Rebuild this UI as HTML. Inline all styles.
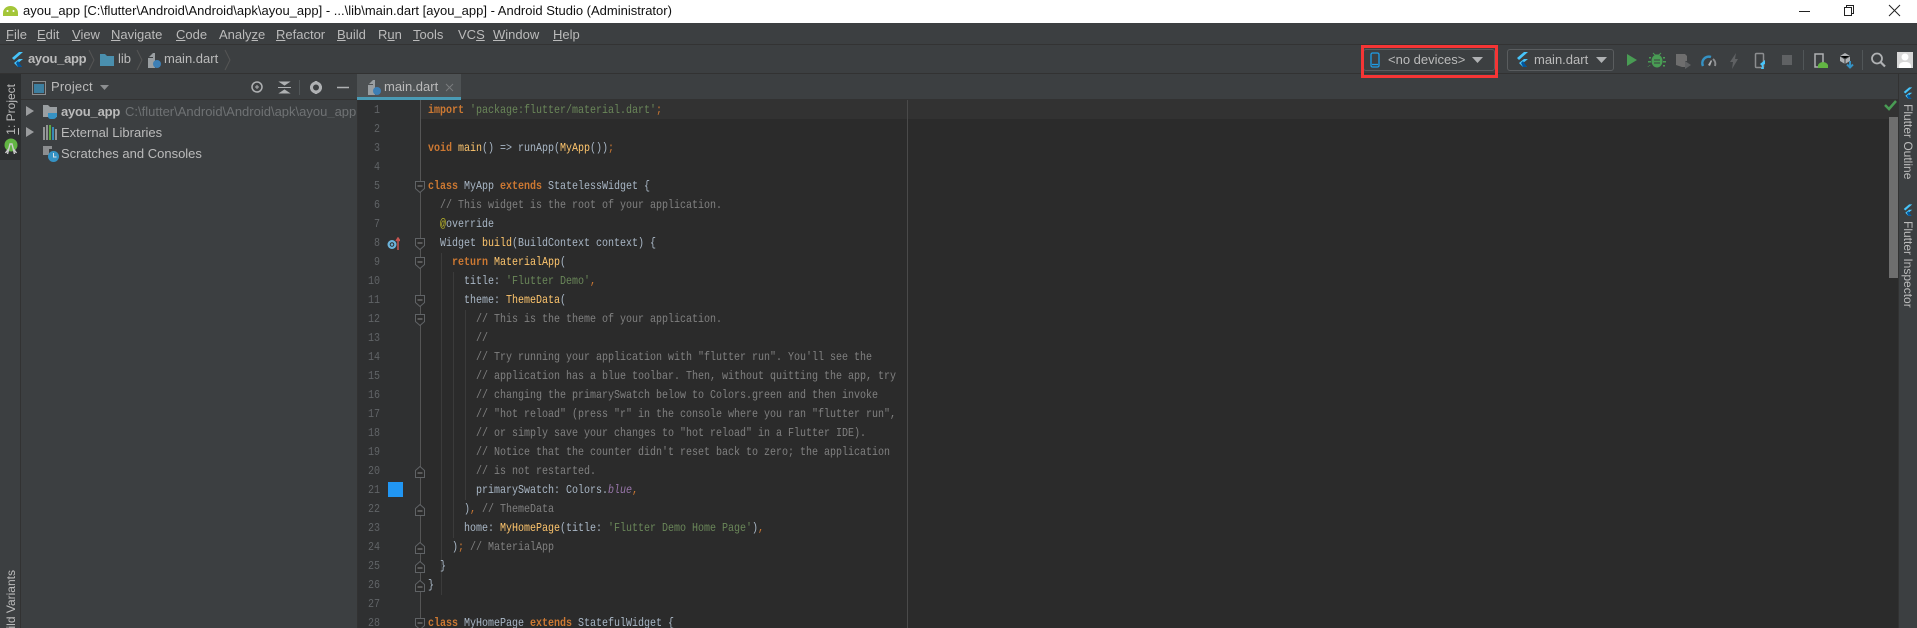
<!DOCTYPE html>
<html><head><meta charset="utf-8"><title>ayou_app</title>
<style>
*{box-sizing:border-box}
html,body{margin:0;padding:0;width:1917px;height:628px;overflow:hidden;background:#3c3f41;font-family:"Liberation Sans",sans-serif}
#root{position:relative;width:1917px;height:628px;overflow:hidden}
.a{position:absolute}
.t{position:absolute;white-space:pre;line-height:1}
#code{position:absolute;left:428px;top:101px;transform:scaleX(.8333);transform-origin:0 0;font:12px/19px "Liberation Mono",monospace;color:#a9b7c6}
#code div{height:19px;white-space:pre}
.k{color:#cc7832;font-weight:bold}.s{color:#6a8759}.c{color:#808080}.f{color:#ffc66d}.n{color:#bbb529}.p{color:#9876aa;font-style:italic}.o{color:#cc7832}
#nums{position:absolute;left:353px;width:27px;top:101px;text-align:right;font:12px/19px "Liberation Mono",monospace;color:#606366;transform:scaleX(.8333);transform-origin:100% 0}
#nums div{height:19px}
.m{position:absolute;top:27px;font-size:13px;color:#bbb;line-height:15px}
.m u{text-decoration:underline}
.ig{position:absolute;width:1px;background:#3b3b3b}
svg{position:absolute;display:block}
</style></head><body><div id="root">
<!-- title bar -->
<div class="a" style="left:0;top:0;width:1917px;height:23px;background:#fff"></div>
<svg style="left:2px;top:4px" width="17" height="12" viewBox="0 0 17 12"><path d="M1 12V9a7.500 7 0 0 1 15 0v3z" fill="#a4c639"/><circle cx="5.500" cy="7" r="1" fill="#fff"/><circle cx="11.500" cy="7" r="1" fill="#fff"/></svg>
<div class="t" style="left:23px;top:4px;font-size:13px;color:#111">ayou_app [C:\flutter\Android\Android\apk\ayou_app] - ...\lib\main.dart [ayou_app] - Android Studio (Administrator)</div>
<svg style="left:1798px;top:4px" width="112" height="14" viewBox="0 0 112 14" fill="none" stroke="#222"><path d="M1 7.500h11"/><rect x="46.500" y="3.500" width="7" height="8"/><path d="M48.500 3.500v-2h7v8h-2"/><path d="M91 1l11 11M102 1L91 12"/></svg>
<!-- menu -->
<div class="a" style="left:0;top:23px;width:1917px;height:22px;background:#3c3f41;border-bottom:1px solid #333"></div>
<div class="m" style="left:6px"><u>F</u>ile</div><div class="m" style="left:37px"><u>E</u>dit</div><div class="m" style="left:72px"><u>V</u>iew</div><div class="m" style="left:111px"><u>N</u>avigate</div><div class="m" style="left:176px"><u>C</u>ode</div><div class="m" style="left:219px">Analy<u>z</u>e</div><div class="m" style="left:276px"><u>R</u>efactor</div><div class="m" style="left:337px"><u>B</u>uild</div><div class="m" style="left:378px">R<u>u</u>n</div><div class="m" style="left:413px"><u>T</u>ools</div><div class="m" style="left:458px">VC<u>S</u></div><div class="m" style="left:493px"><u>W</u>indow</div><div class="m" style="left:553px"><u>H</u>elp</div>
<!-- nav -->
<div class="a" style="left:0;top:73px;width:1917px;height:1px;background:#323232"></div>
<svg style="left:11px;top:52px" width="13" height="15" viewBox="0 0 13 15"><path d="M8 0h4L3 8 1 6z" fill="#47c5fb"/><path d="M8 7h4L7 11l4 4H7L3 11z" fill="#47c5fb"/><path d="M5 11l2-2 4 6H7z" fill="#00569e"/></svg>
<div class="t" style="left:28px;top:52px;font-size:13px;font-weight:bold;color:#bbb;letter-spacing:-.3px">ayou_app</div>
<svg style="left:88px;top:49px" width="8" height="22" viewBox="0 0 8 22" fill="none" stroke="#555"><path d="M1 1l5 10-5 10"/></svg>
<svg style="left:100px;top:54px" width="14" height="12" viewBox="0 0 14 12"><path d="M0 0h5l2 2h7v10H0z" fill="#4a8fae"/></svg>
<div class="t" style="left:118px;top:52px;font-size:13px;color:#bbb">lib</div>
<svg style="left:136px;top:49px" width="8" height="22" viewBox="0 0 8 22" fill="none" stroke="#555"><path d="M1 1l5 10-5 10"/></svg>
<svg style="left:148px;top:52px" width="13" height="16" viewBox="0 0 13 16"><path d="M1 5l4-4v4zM0 6h5V1h2v15H0z" fill="#9a9fa2"/><circle cx="9" cy="12" r="4" fill="#3d7fb5"/></svg>
<div class="t" style="left:164px;top:52px;font-size:13px;color:#bbb">main.dart</div>
<svg style="left:224px;top:49px" width="8" height="22" viewBox="0 0 8 22" fill="none" stroke="#555"><path d="M1 1l5 10-5 10"/></svg>
<!-- device combos -->
<div class="a" style="left:1363px;top:49px;width:132px;height:22px;border:1px solid #5a5d5f;border-radius:3px"></div>
<svg style="left:1370px;top:52px" width="10" height="16" viewBox="0 0 10 16" fill="none" stroke="#1e9ee8" stroke-width="1.300"><rect x="1" y="1" width="8" height="14" rx="1.500"/><path d="M2 12.500h6"/></svg>
<div class="t" style="left:1388px;top:53px;font-size:13px;color:#bbb">&lt;no devices&gt;</div>
<svg style="left:1472px;top:57px" width="11" height="6" viewBox="0 0 11 6"><path d="M0 0h11L5.500 6z" fill="#afb1b3"/></svg>
<div class="a" style="left:1361px;top:45px;width:137px;height:33px;border:3px solid #f53535"></div>
<div class="a" style="left:1507px;top:49px;width:107px;height:22px;border:1px solid #5a5d5f;border-radius:3px"></div>
<svg style="left:1516px;top:52px" width="13" height="16" viewBox="0 0 13 16"><path d="M8 0h4L3 8 1 6z" fill="#47c5fb"/><path d="M8 7h4L7 11l4 4H7L3 11z" fill="#47c5fb"/><path d="M5 11l2-2 4 6H7z" fill="#00569e"/></svg>
<div class="t" style="left:1534px;top:53px;font-size:13px;color:#bbb">main.dart</div>
<svg style="left:1596px;top:57px" width="11" height="6" viewBox="0 0 11 6"><path d="M0 0h11L5.500 6z" fill="#afb1b3"/></svg>
<!-- toolbar icons -->
<svg style="left:1620px;top:48px" width="297" height="24" viewBox="1620 48 297 24">
<path d="M1627 54l10 6-10 6z" fill="#499c54"/>
<g fill="#499c54"><ellipse cx="1657" cy="61" rx="5.500" ry="6.500"/><path d="M1651 57h-2v1.500h2zM1663 57h2v1.500h-2zM1651 61h-3v1.500h3zM1663 61h3v1.500h-3zM1651 65h-2v1.500h-2zM1663 65h2v1.500h-2z"/><path d="M1653 53l2 2h4l2-2" stroke="#499c54" fill="none"/></g><path d="M1654 60h6M1654 63h6" stroke="#3c3f41"/>
<path d="M1676 54h9l2 2v5h-2v6h-3l-6-2z" fill="#6e6e6e"/><path d="M1685 61l6 4-6 4z" fill="#5f6163"/>
<path d="M1703 66a6.500 6.500 0 0 1 8-9" stroke="#3592c4" stroke-width="2.500" fill="none"/><path d="M1713 59a6.500 6.500 0 0 1 2 7" stroke="#8c8e90" stroke-width="2" fill="none"/><path d="M1708 65l3-5 1 1-2 5z" fill="#afb1b3"/>
<path d="M1736 53l-6 9h3l-1 7 6-10h-3z" fill="#5f6163"/>
<rect x="1755.500" y="53.500" width="8" height="14" rx="1" fill="none" stroke="#8c8e90" stroke-width="1.500"/><path d="M1765 60l-5 4 2 2-1 3h3l-1-4 2-1z" fill="#47c5fb"/>
<rect x="1782" y="55" width="10" height="10" fill="#5f6163"/>
<path d="M1803.500 50v20M1862.500 50v20" stroke="#515658"/>
<rect x="1815" y="54" width="8" height="13" fill="none" stroke="#afb1b3" stroke-width="1.500"/><path d="M1817 68v-3a5.500 5 0 0 1 10 0v3z" fill="#62b543" transform="translate(1 0)"/>
<path d="M1840 56l5-3 5 3v5l-5 3-5-3z" fill="#afb1b3"/><path d="M1845 58v6M1840 56l5 3 5-3" stroke="#3c3f41"/><path d="M1850 61v6M1847 64.500l3 3 3-3" stroke="#3592c4" stroke-width="2" fill="none"/>
<circle cx="1877" cy="58.500" r="5" fill="none" stroke="#afb1b3" stroke-width="1.800"/><path d="M1880.500 62l4.500 4.500" stroke="#afb1b3" stroke-width="2.200"/>
<rect x="1897" y="52" width="16" height="16" fill="#d8d8d8"/><circle cx="1905" cy="57" r="3.500" fill="#fff"/><path d="M1899 68v-2q0-3 4-4h4q4 1 4 4v2z" fill="#fff"/>
</svg>
<!-- left strip -->
<div class="a" style="left:0;top:74px;width:21px;height:554px;background:#3c3f41;border-right:1px solid #323232"></div>
<div class="a" style="left:0;top:74px;width:21px;height:86px;background:#2d2f30"></div>
<div class="t" style="left:5px;top:84px;font-size:12px;line-height:13px;color:#bbb;writing-mode:vertical-rl;transform:rotate(180deg)"><u>1</u>: Project</div>
<svg style="left:4px;top:138px" width="14" height="17" viewBox="0 0 14 17"><circle cx="7" cy="7" r="6.500" fill="#62b543"/><path d="M3.500 16l2.500-10h2l2.500 10M4.500 11l-3 4M9.500 11l3 4" stroke="#ccc" fill="none" stroke-width="1.400"/></svg>
<div class="t" style="left:5px;top:570px;font-size:12px;line-height:13px;color:#bbb;writing-mode:vertical-rl;transform:rotate(180deg)">Build Variants</div>
<!-- project panel header -->
<div class="a" style="left:21px;top:99px;width:336px;height:1px;background:#323232"></div>
<svg style="left:32px;top:81px" width="14" height="14" viewBox="0 0 14 14"><rect x=".5" y=".5" width="13" height="13" fill="none" stroke="#8c8e90"/><rect x="2" y="3" width="10" height="9" fill="#3d7fa0"/></svg>
<div class="t" style="left:51px;top:80px;font-size:13px;color:#bbb;letter-spacing:.2px">Project</div>
<svg style="left:100px;top:85px" width="9" height="6" viewBox="0 0 9 6"><path d="M0 0h9L4.500 5z" fill="#8c8e90"/></svg>
<svg style="left:245px;top:79px" width="108" height="18" viewBox="245 79 108 18">
<circle cx="257" cy="87" r="5" fill="none" stroke="#afb1b3" stroke-width="1.500"/><path d="M255 87h4M257 85v4" stroke="#afb1b3"/>
<path d="M278 87.500h13M280 82h9l-4.500 3zM280 93h9l-4.500-3z" stroke="#afb1b3" fill="#afb1b3" stroke-width="1"/>
<path d="M299.500 80v15" stroke="#515658"/>
<circle cx="316" cy="87.500" r="4.500" fill="none" stroke="#afb1b3" stroke-width="3"/><path d="M316 81v2M316 92v2M310 87.500h2M320 87.500h2" stroke="#afb1b3" stroke-width="2.500"/>
<path d="M337 87.500h12" stroke="#afb1b3" stroke-width="1.500"/>
</svg>
<!-- tree -->
<svg style="left:26px;top:106px" width="9" height="60" viewBox="0 0 9 60"><path d="M0 0l8 5-8 5zM0 21l8 5-8 5z" fill="#9a9c9e"/></svg>
<svg style="left:43px;top:104px" width="15" height="16" viewBox="0 0 15 16"><path d="M0 1h5l2 2h7v10H0z" fill="#9a9fa2"/><path d="M5 9h9v3q-1 3-4 3H8q-3 0-3-3z" fill="#3592c4"/></svg>
<div class="t" style="left:61px;top:105px;font-size:13px;font-weight:bold;color:#bbb;letter-spacing:-.2px">ayou_app</div>
<div class="t" style="left:125px;top:105px;width:232px;overflow:hidden;font-size:13px;color:#6f7274">C:\flutter\Android\Android\apk\ayou_app</div>
<svg style="left:43px;top:125px" width="14" height="15" viewBox="0 0 14 15"><path d="M1 2v13M4 0v15" stroke="#afb1b3" stroke-width="1.500"/><path d="M7 0v15" stroke="#62b543" stroke-width="1.800"/><path d="M10 2v13" stroke="#3592c4" stroke-width="1.800"/><path d="M13 4v11" stroke="#afb1b3" stroke-width="1.500"/></svg>
<div class="t" style="left:61px;top:126px;font-size:13px;color:#bbb">External Libraries</div>
<svg style="left:43px;top:146px" width="16" height="16" viewBox="0 0 16 16"><path d="M0 0h9v3H6v6H0z" fill="#8c8e90"/><circle cx="10.500" cy="10.500" r="5.500" fill="#3592c4"/><path d="M10.500 7v4h3" stroke="#dfe1e5" fill="none"/></svg>
<div class="t" style="left:61px;top:147px;font-size:13px;color:#bbb">Scratches and Consoles</div>
<!-- tabs -->
<div class="a" style="left:357px;top:74px;width:1px;height:554px;background:#323232"></div>
<div class="a" style="left:358px;top:99px;width:1540px;height:1px;background:#323232"></div>
<div class="a" style="left:357px;top:74px;width:104px;height:26px;background:#4e5254"></div>
<div class="a" style="left:357px;top:97px;width:104px;height:3px;background:#4a9bb5"></div>
<svg style="left:368px;top:79px" width="13" height="16" viewBox="0 0 13 16"><path d="M1 5l4-4v4zM0 6h5V1h2v15H0z" fill="#9a9fa2"/><circle cx="9" cy="12" r="4" fill="#3d7fb5"/></svg>
<div class="t" style="left:384px;top:80px;font-size:13px;color:#bbb">main.dart</div>
<svg style="left:445px;top:83px" width="9" height="9" viewBox="0 0 9 9" stroke="#7a7c7e"><path d="M1 1l7 7M8 1L1 8"/></svg>
<!-- editor -->
<div class="a" style="left:358px;top:100px;width:1540px;height:528px;background:#2b2b2b"></div>
<div class="a" style="left:358px;top:100px;width:62px;height:528px;background:#2f3031"></div>
<div class="a" style="left:420px;top:100px;width:1px;height:528px;background:#555"></div>
<div class="a" style="left:421px;top:100px;width:1477px;height:19px;background:#323232"></div>
<div class="a" style="left:907px;top:100px;width:1px;height:528px;background:#4a4a4a"></div>
<div class="ig" style="left:441px;top:253px;height:342px"></div>
<div class="ig" style="left:453px;top:272px;height:266px"></div>
<div class="ig" style="left:465px;top:310px;height:190px"></div>
<div class="a" style="left:1889px;top:117px;width:9px;height:161px;background:#6e6e6e"></div>
<svg style="left:1884px;top:100px" width="13" height="11" viewBox="0 0 13 11"><path d="M1 5l4 4 7-8" stroke="#499c54" stroke-width="2.500" fill="none"/></svg>
<div id="nums"><div>1</div><div>2</div><div>3</div><div>4</div><div>5</div><div>6</div><div>7</div><div>8</div><div>9</div><div>10</div><div>11</div><div>12</div><div>13</div><div>14</div><div>15</div><div>16</div><div>17</div><div>18</div><div>19</div><div>20</div><div>21</div><div>22</div><div>23</div><div>24</div><div>25</div><div>26</div><div>27</div><div>28</div></div>
<svg style="left:415px;top:181px" width="10" height="12"><path d="M.5.5h9v7L5 11.500.5 7.500z" fill="#2b2b2b" stroke="#606366"/><path d="M2.500 5h5" stroke="#888"/></svg>
<svg style="left:415px;top:238px" width="10" height="12"><path d="M.5.5h9v7L5 11.500.5 7.500z" fill="#2b2b2b" stroke="#606366"/><path d="M2.500 5h5" stroke="#888"/></svg>
<svg style="left:415px;top:257px" width="10" height="12"><path d="M.5.5h9v7L5 11.500.5 7.500z" fill="#2b2b2b" stroke="#606366"/><path d="M2.500 5h5" stroke="#888"/></svg>
<svg style="left:415px;top:295px" width="10" height="12"><path d="M.5.5h9v7L5 11.500.5 7.500z" fill="#2b2b2b" stroke="#606366"/><path d="M2.500 5h5" stroke="#888"/></svg>
<svg style="left:415px;top:314px" width="10" height="12"><path d="M.5.5h9v7L5 11.500.5 7.500z" fill="#2b2b2b" stroke="#606366"/><path d="M2.500 5h5" stroke="#888"/></svg>
<svg style="left:415px;top:618px" width="10" height="12"><path d="M.5.5h9v7L5 11.500.5 7.500z" fill="#2b2b2b" stroke="#606366"/><path d="M2.500 5h5" stroke="#888"/></svg>
<svg style="left:415px;top:466px" width="10" height="12"><path d="M.5 11.500h9v-7L5 .5.5 4.500z" fill="#2b2b2b" stroke="#606366"/><path d="M2.500 7h5" stroke="#888"/></svg>
<svg style="left:415px;top:504px" width="10" height="12"><path d="M.5 11.500h9v-7L5 .5.5 4.500z" fill="#2b2b2b" stroke="#606366"/><path d="M2.500 7h5" stroke="#888"/></svg>
<svg style="left:415px;top:542px" width="10" height="12"><path d="M.5 11.500h9v-7L5 .5.5 4.500z" fill="#2b2b2b" stroke="#606366"/><path d="M2.500 7h5" stroke="#888"/></svg>
<svg style="left:415px;top:561px" width="10" height="12"><path d="M.5 11.500h9v-7L5 .5.5 4.500z" fill="#2b2b2b" stroke="#606366"/><path d="M2.500 7h5" stroke="#888"/></svg>
<svg style="left:415px;top:580px" width="10" height="12"><path d="M.5 11.500h9v-7L5 .5.5 4.500z" fill="#2b2b2b" stroke="#606366"/><path d="M2.500 7h5" stroke="#888"/></svg>
<svg style="left:387px;top:237px" width="13" height="13" viewBox="0 0 13 13"><circle cx="5" cy="7.500" r="4.500" fill="#6cb4dc"/><circle cx="5" cy="7.500" r="1.800" fill="none" stroke="#2b2b2b"/><path d="M11 13V2M9 4l2-3 2 3" stroke="#c75450" stroke-width="1.500" fill="none"/></svg>
<div class="a" style="left:388px;top:482px;width:15px;height:15px;background:#2196f3"></div>
<div id="code"><div><span class="k">import</span> <span class="s">'package:flutter/material.dart'</span><span class="o">;</span></div><div></div><div><span class="k">void</span> <span class="f">main</span>() =&gt; runApp(<span class="f">MyApp</span>())<span class="o">;</span></div><div></div><div><span class="k">class</span> MyApp <span class="k">extends</span> StatelessWidget {</div><div><span class="c">  // This widget is the root of your application.</span></div><div>  <span class="n">@</span>override</div><div>  Widget <span class="f">build</span>(BuildContext context) {</div><div>    <span class="k">return</span> <span class="f">MaterialApp</span>(</div><div>      title: <span class="s">'Flutter Demo'</span><span class="o">,</span></div><div>      theme: <span class="f">ThemeData</span>(</div><div><span class="c">        // This is the theme of your application.</span></div><div><span class="c">        //</span></div><div><span class="c">        // Try running your application with "flutter run". You'll see the</span></div><div><span class="c">        // application has a blue toolbar. Then, without quitting the app, try</span></div><div><span class="c">        // changing the primarySwatch below to Colors.green and then invoke</span></div><div><span class="c">        // "hot reload" (press "r" in the console where you ran "flutter run",</span></div><div><span class="c">        // or simply save your changes to "hot reload" in a Flutter IDE).</span></div><div><span class="c">        // Notice that the counter didn't reset back to zero; the application</span></div><div><span class="c">        // is not restarted.</span></div><div>        primarySwatch: Colors.<span class="p">blue</span><span class="o">,</span></div><div>      )<span class="o">,</span> <span class="c">// ThemeData</span></div><div>      home: <span class="f">MyHomePage</span>(title: <span class="s">'Flutter Demo Home Page'</span>)<span class="o">,</span></div><div>    )<span class="o">;</span> <span class="c">// MaterialApp</span></div><div>  }</div><div>}</div><div></div><div><span class="k">class</span> MyHomePage <span class="k">extends</span> StatefulWidget {</div></div>
<!-- right strip -->
<div class="a" style="left:1898px;top:74px;width:19px;height:554px;background:#3c3f41;border-left:1px solid #323232"></div>
<svg style="left:1903px;top:87px" width="10" height="13" viewBox="0 0 13 16"><path d="M8 0h4L3 8 1 6z" fill="#47c5fb"/><path d="M8 7h4L7 11l4 4H7L3 11z" fill="#47c5fb"/><path d="M5 11l2-2 4 6H7z" fill="#00569e"/></svg>
<div class="t" style="left:1901px;top:104px;font-size:12px;line-height:13px;color:#bbb;writing-mode:vertical-rl">Flutter Outline</div>
<svg style="left:1903px;top:204px" width="10" height="13" viewBox="0 0 13 16"><path d="M8 0h4L3 8 1 6z" fill="#47c5fb"/><path d="M8 7h4L7 11l4 4H7L3 11z" fill="#47c5fb"/><path d="M5 11l2-2 4 6H7z" fill="#00569e"/></svg>
<div class="t" style="left:1901px;top:221px;font-size:12px;line-height:13px;color:#bbb;writing-mode:vertical-rl">Flutter Inspector</div>
</div></body></html>
